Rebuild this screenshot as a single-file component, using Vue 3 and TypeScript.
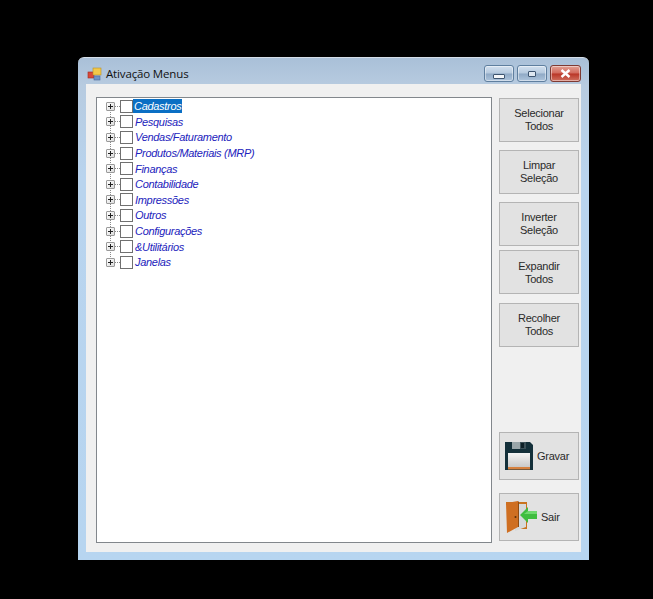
<script setup lang="ts">
const items: string[] = [
  'Cadastros', 'Pesquisas', 'Vendas/Faturamento', 'Produtos/Materiais (MRP)', 'Finanças',
  'Contabilidade', 'Impressões', 'Outros', 'Configurações', '&Utilitários', 'Janelas',
]
const topButtons: { label: string[]; cls: string }[] = [
  { label: ['Selecionar', 'Todos'], cls: 'g8' },
  { label: ['Limpar', 'Seleção'], cls: 'g8' },
  { label: ['Inverter', 'Seleção'], cls: 'g4' },
  { label: ['Expandir', 'Todos'], cls: 'g9' },
  { label: ['Recolher', 'Todos'], cls: '' },
]
</script>

<template>
  <div class="page">
    <div class="window">
      <div class="titlebar">
        <svg class="appicon" width="16" height="16" viewBox="0 0 16 16">
          <rect x="1" y="6" width="6" height="6" fill="#d8493a" stroke="#a02a20" stroke-width="0.6" />
          <rect x="6" y="2" width="8" height="7" fill="#f2c84a" stroke="#b98f22" stroke-width="0.6" />
          <rect x="7" y="10" width="6" height="4" fill="#6f94c8" stroke="#47699c" stroke-width="0.6" />
        </svg>
        <span class="title">Ativação Menus</span>
        <div class="controls">
          <div class="ctl ctl-blue"><i class="min-glyph"></i></div>
          <div class="ctl ctl-blue"><i class="max-glyph"></i></div>
          <div class="ctl ctl-close">
            <svg width="11" height="9" viewBox="0 0 11 9">
              <path d="M1.5 1 L9.5 8 M9.5 1 L1.5 8" stroke="#fff" stroke-width="2.4" />
            </svg>
          </div>
        </div>
      </div>
      <div class="client">
        <div class="tree">
          <div class="vline"></div>
          <div v-for="(item, i) in items" :key="item" class="row">
            <span class="plus"></span>
            <span class="hline"></span>
            <span class="check"></span>
            <span class="label" :class="{ selected: i === 0 }">{{ item }}</span>
          </div>
        </div>
        <div class="side">
          <button v-for="b in topButtons" :key="b.label[0]" class="btn" :class="b.cls">
            <span>{{ b.label[0] }}</span><span>{{ b.label[1] }}</span>
          </button>
          <div class="spacer"></div>
          <button class="btn icon-btn gravar">
            <svg width="28" height="28" viewBox="0 0 28 28">
              <path d="M0 0 H25 L28 3 V28 H0 Z" fill="#14303a" />
              <rect x="7" y="0" width="14" height="7" fill="#3c5058" />
              <rect x="7" y="0" width="8" height="7" fill="#9aa6aa" />
              <rect x="16" y="1" width="3" height="5" fill="#0e2027" />
              <defs>
                <linearGradient id="lbl" x1="0" y1="0" x2="0" y2="1">
                  <stop offset="0" stop-color="#f5f5f5" />
                  <stop offset="1" stop-color="#c9c9c9" />
                </linearGradient>
              </defs>
              <rect x="3" y="11" width="22" height="14" fill="url(#lbl)" />
              <rect x="3" y="25" width="22" height="2.5" fill="#d6813f" />
            </svg>
            <span class="icon-text">Gravar</span>
          </button>
          <button class="btn icon-btn sair">
            <svg width="32" height="33" viewBox="0 0 32 33">
              <path d="M0 1 H21 V28 H10 V4 H0 Z" fill="#c9731f" />
              <path d="M9 3 H20 V26 L9 30 Z" fill="#d6d9db" />
              <path d="M0 2 L12 0 V26 L1 32 Z" fill="#cf6f22" />
              <path d="M12 0 L13 1 V26 L12 26 Z" fill="#8f4c12" />
              <circle cx="9.5" cy="16" r="1" fill="#5c2f0a" />
              <path d="M14 14 L22 6 V10 H31 V18 H22 V22 Z" fill="#3fbd3f" />
              <path d="M22 10 H31 V13 H18 Z" fill="#6fd96f" />
            </svg>
            <span class="icon-text">Sair</span>
          </button>
        </div>
      </div>
    </div>
  </div>
</template>

<style>
html, body { margin: 0; background: #000; }
</style>

<style scoped>
.page {
  width: 653px;
  height: 599px;
  background: #000;
  padding: 57px 0 0 78px;
  box-sizing: border-box;
  overflow: hidden;
  font-family: "Liberation Sans", Arial, sans-serif;
}
.window {
  width: 511px;
  height: 503px;
  box-sizing: border-box;
  padding: 0 8px 8px;
  border-radius: 6px 6px 0 0;
  background: linear-gradient(180deg, #a9c0d8 0px, #b7cbe0 28px, #b9d4ee 120px, #b7d5f0 100%);
  display: flex;
  flex-direction: column;
  border-top: 1px solid #d5dee8;
}
.titlebar {
  height: 26px;
  flex: none;
  display: flex;
  align-items: flex-start;
}
.appicon { margin: 8px 0 0 1px; flex: none; }
.title {
  margin: 8px 0 0 3px;
  font-family: "Open Sans", "Liberation Sans", sans-serif;
  font-size: 11.5px;
  letter-spacing: -0.15px;
  line-height: 16px;
  color: #111;
}
.controls {
  margin-left: auto;
  display: flex;
  gap: 3px;
  margin-top: 7px;
}
.ctl {
  width: 30px;
  height: 17px;
  box-sizing: border-box;
  border: 1px solid #5f7f9f;
  border-radius: 3px;
  display: flex;
  align-items: center;
  justify-content: center;
  box-shadow: inset 0 0 0 1px rgba(255, 255, 255, 0.45);
}
.ctl-blue { background: linear-gradient(180deg, #d2e0ef 0%, #b5c9de 48%, #8fa9c5 52%, #adc4dc 100%); }
.ctl-close {
  width: 31px;
  border-color: #7e3a33;
  background: linear-gradient(180deg, #e2a093 0%, #d2695c 48%, #b93526 52%, #d0705f 100%);
}
.min-glyph {
  display: block;
  width: 10px;
  height: 3px;
  margin-top: 6px;
  background: #f4f7fa;
  border: 1px solid #3e5570;
  border-radius: 1px;
}
.max-glyph {
  display: block;
  width: 6px;
  height: 4px;
  background: #dfe8f1;
  border: 1px solid #3e5570;
  border-radius: 1px;
}
.client {
  flex: 1;
  background: #f0f0f0;
  box-sizing: border-box;
  padding: 13px 2px 9px 10px;
  display: flex;
  gap: 7px;
  min-height: 0;
}
.tree {
  position: relative;
  width: 396px;
  flex: none;
  box-sizing: border-box;
  background: #fff;
  border: 1px solid #82878c;
  padding-top: 0.5px;
}
.vline {
  position: absolute;
  left: 13px;
  top: 9px;
  height: 156px;
  border-left: 1px dotted #8a8a8a;
}
.row {
  position: relative;
  height: 15.6px;
  display: flex;
  align-items: center;
  padding-left: 9px;
}
.plus {
  position: relative;
  width: 9px;
  height: 9px;
  box-sizing: border-box;
  border: 1px solid #9a9a9a;
  border-radius: 1px;
  background: linear-gradient(135deg, #fff, #dcdcdc);
  flex: none;
  z-index: 1;
}
.plus::before, .plus::after {
  content: "";
  position: absolute;
  background: #222;
}
.plus::before { left: 1px; top: 3px; width: 5px; height: 1px; }
.plus::after { left: 3px; top: 1px; width: 1px; height: 5px; }
.hline {
  width: 5px;
  border-top: 1px dotted #8a8a8a;
  flex: none;
}
.check {
  width: 13px;
  height: 13px;
  box-sizing: border-box;
  background: #fff;
  border: 1px solid #707070;
  flex: none;
}
.label {
  margin-left: 1px;
  padding: 0 1px;
  height: 14px;
  line-height: 14px;
  font-size: 11px;
  font-style: italic;
  letter-spacing: -0.3px;
  color: #2222bc;
  white-space: nowrap;
}
.label.selected {
  margin-left: 0;
  background: #0a6fc4;
  color: #fff;
}
.side {
  width: 80px;
  flex: none;
  display: flex;
  flex-direction: column;
  padding-top: 1px;
}
.btn {
  height: 44px;
  flex: none;
  box-sizing: border-box;
  padding: 0;
  background: #e2e2e2;
  border: 1px solid #b4b4b4;
  display: flex;
  flex-direction: column;
  align-items: center;
  justify-content: center;
  font-family: "Liberation Sans", Arial, sans-serif;
  font-size: 11px;
  letter-spacing: -0.25px;
  line-height: 13px;
  color: #2a2a2a;
}
.g8 { margin-bottom: 8px; }
.g4 { margin-bottom: 4px; }
.g9 { margin-bottom: 9px; padding-top: 2px; }
.spacer { flex: 1; }
.icon-btn {
  height: 48px;
  flex-direction: row;
  justify-content: flex-start;
}
.gravar { margin-bottom: 13px; padding-left: 5px; }
.sair { padding-left: 6px; margin-bottom: 2px; }
.gravar .icon-text { margin-left: 4px; }
.sair .icon-text { margin-left: 3px; }
</style>
